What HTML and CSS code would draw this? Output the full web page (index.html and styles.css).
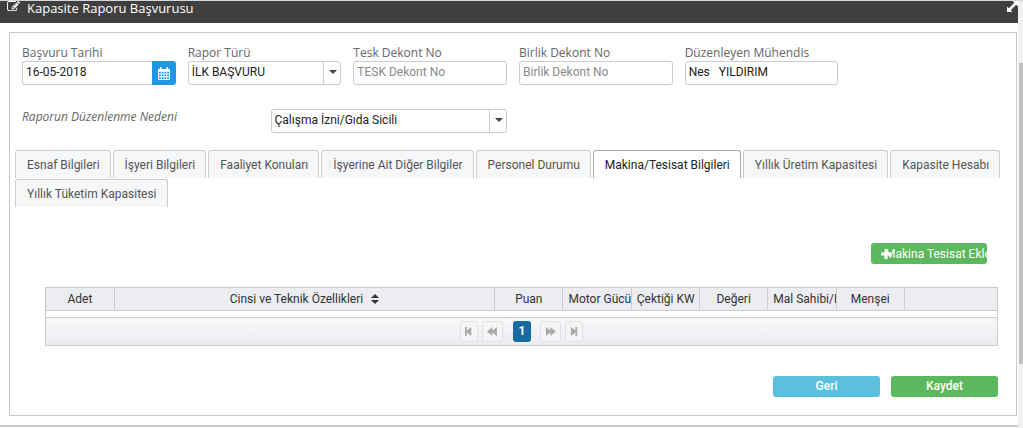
FILE: index.html
```html
<!DOCTYPE html>
<html lang="tr">
<head>
<meta charset="utf-8">
<title>Kapasite Raporu Başvurusu</title>
<link rel="stylesheet" href="styles.css">
</head>
<body>
<div class="viewport">
  <main class="page">
    <header class="titlebar">
      <svg class="edit-icon" viewBox="0 0 1792 1536" aria-hidden="true"><path d="M888 1056l116-116-152-152-116 116v56h96v96h56zm440-720q-16-16-33 1L945 687q-17 17-1 33t33-1l350-350q17-17 1-33zm80 594v190q0 119-84.500 203.500T1120 1408H288q-119 0-203.500-84.500T0 1120V288Q0 169 84.500 84.500T288 0h832q63 0 117 25 15 7 18 23 3 17-9 29l-49 49q-14 14-32 8-23-6-45-6H288q-66 0-113 47t-47 113v832q0 66 47 113t113 47h832q66 0 113-47t47-113V994q0-13 9-22l64-64q15-15 35-7t20 29zm-96-738l288 288-672 672H640V864zm444 132l-92 92-288-288 92-92q28-28 68-28t68 28l152 152q28 28 28 68t-28 68z"/></svg>
      <h1 class="title">Kapasite Raporu Başvurusu</h1>
      <button class="expand" type="button" aria-label="Tam ekran"><svg viewBox="0 0 12 12"><path d="M6 0h6v6L10 4 4 10l2 2H0V6l2 2 6-6z"/></svg></button>
    </header>
    <section class="panel">
      <form class="form">
        <div class="row six">
          <div class="field">
            <label for="tarih">Başvuru Tarihi</label>
            <div class="date">
              <input class="control" id="tarih" type="text" value="16-05-2018">
              <button class="calendar" type="button" aria-label="Takvim"><svg viewBox="0 0 13 14"><path fill-rule="evenodd" d="M1 2h1V1q0-1 1-1t1 1v1h5V1q0-1 1-1t1 1v1h1q1 0 1 1v10q0 1-1 1H1q-1 0-1-1V3q0-1 1-1zm0 3v2h2V5zm3 0v2h2V5zm3 0v2h2V5zm3 0v2h2V5zM1 8v2h2V8zm3 0v2h2V8zm3 0v2h2V8zm3 0v2h2V8zm-9 3v2h2v-2zm3 0v2h2v-2zm3 0v2h2v-2zm3 0v2h2v-2z"/></svg></button>
            </div>
          </div>
          <div class="field">
            <label for="tur">Rapor Türü</label>
            <div class="select">
              <select class="control" id="tur"><option>İLK BAŞVURU</option></select>
              <span class="arrow"><svg viewBox="0 0 8 4"><path d="M0 0h8L4 4z"/></svg></span>
            </div>
          </div>
          <div class="field">
            <label for="tesk">Tesk Dekont No</label>
            <input class="control" id="tesk" type="text" placeholder="TESK Dekont No">
          </div>
          <div class="field">
            <label for="birlik">Birlik Dekont No</label>
            <input class="control" id="birlik" type="text" placeholder="Birlik Dekont No">
          </div>
          <div class="field">
            <label for="muhendis">Düzenleyen Mühendis</label>
            <input class="control" id="muhendis" type="text" value="Nes   YILDIRIM">
          </div>
        </div>
        <div class="row four">
          <label class="reason" for="neden">Raporun Düzenlenme Nedeni</label>
          <div class="select">
            <select class="control" id="neden"><option>Çalışma İzni/Gıda Sicili</option></select>
            <span class="arrow"><svg viewBox="0 0 8 4"><path d="M0 0h8L4 4z"/></svg></span>
          </div>
        </div>
      </form>
      <nav class="tabs" role="tablist">
        <button class="tab" type="button" role="tab">Esnaf Bilgileri</button>
        <button class="tab" type="button" role="tab">İşyeri Bilgileri</button>
        <button class="tab" type="button" role="tab">Faaliyet Konuları</button>
        <button class="tab" type="button" role="tab">İşyerine Ait Diğer Bilgiler</button>
        <button class="tab" type="button" role="tab">Personel Durumu</button>
        <button class="tab active" type="button" role="tab" aria-selected="true">Makina/Tesisat Bilgileri</button>
        <button class="tab" type="button" role="tab">Yıllık Üretim Kapasitesi</button>
        <button class="tab" type="button" role="tab">Kapasite Hesabı</button>
        <button class="tab" type="button" role="tab">Yıllık Tüketim Kapasitesi</button>
      </nav>
      <div class="content">
        <div class="toolbar">
          <button class="btn green add" type="button"><svg class="plus" viewBox="0 0 10 10"><path d="M3.500 0h3v3.500H10v3H6.500V10h-3V6.500H0v-3h3.500z"/></svg><span class="add-text">Makina Tesisat Ekle</span></button>
        </div>
        <div class="grid">
          <table class="table">
            <colgroup><col class="narrow"><col class="wide"><col class="narrow"><col class="narrow"><col class="narrow"><col class="narrow"><col class="narrow"><col class="narrow"><col></colgroup>
            <thead>
              <tr><th>Adet</th><th>Cinsi ve Teknik Özellikleri<svg class="sort" viewBox="0 0 8 10"><path d="M0 4l4-4 4 4zM0 6h8l-4 4z"/></svg></th><th>Puan</th><th class="cut">Motor Gücü</th><th class="cut">Çektiği KW</th><th>Değeri</th><th class="cut">Mal Sahibi/K</th><th>Menşei</th><th></th></tr>
            </thead>
          </table>
          <div class="pager">
            <button class="page-btn" type="button" aria-label="İlk" disabled><svg viewBox="0 0 8 10"><path d="M0 0h2v4l5-4v10L2 6v4H0z"/></svg></button>
            <button class="page-btn large" type="button" aria-label="Önceki" disabled><svg viewBox="0 0 12 10"><path d="M6 0v4l5-4v10L6 6v4L0 5z"/></svg></button>
            <button class="page-btn current" type="button">1</button>
            <button class="page-btn large" type="button" aria-label="Sonraki" disabled><svg viewBox="0 0 12 10"><path d="M6 0v4L1 0v10l5-4v4l6-5z"/></svg></button>
            <button class="page-btn" type="button" aria-label="Son" disabled><svg viewBox="0 0 8 10"><path d="M8 0H6v4L1 0v10l5-4v4h2z"/></svg></button>
          </div>
        </div>
        <div class="actions">
          <button class="btn blue" type="button">Geri</button>
          <button class="btn green" type="button">Kaydet</button>
        </div>
      </div>
    </section>
  </main>
  <div class="scrollbar"><div class="thumb"></div></div>
</div>
</body>
</html>
```
FILE: styles.css
```css
* { box-sizing: border-box; }
body {
  margin: 0;
  background: #fff;
  color: #333;
  font: 12px/16px Roboto, sans-serif;
}
button, input, select { font: inherit; margin: 0; }
button { padding: 0; border: 0; background: none; }
svg { display: block; fill: currentColor; flex: none; }

.viewport { display: flex; height: 100vh; overflow: hidden; border-top: 1px solid #d5d8da; }
.page { flex: 1; min-width: 0; align-self: flex-start; border-bottom: 2px solid #c8cbcb; }
.scrollbar { width: 5px; padding: 62px 0 64px 1px; background: #f1f1f1; display: flex; }
.thumb { flex: 1; background: #c1c1c1; }

.titlebar {
  display: flex;
  align-items: flex-start;
  height: 22px;
  padding-left: 7px;
  background: #3f3f3f;
  color: #fff;
}
.edit-icon { width: 13px; height: 11px; }
.title { flex: 1; margin: 0 0 0 7px; font: 13px/14px "Open Sans", sans-serif; }
.expand { color: #fff; }
.expand svg { width: 11px; height: 11px; }

.panel { margin: 9px 1px 9px 9px; border: 1px solid #c8c8c8; }
.form { padding: 12px 12px 0; }
.row { display: grid; column-gap: 12px; }
.six { grid-template-columns: repeat(6, 1fr); }
.four { grid-template-columns: repeat(4, 1fr); margin-top: 24px; }
.field { display: flex; flex-direction: column; min-width: 0; }
.field label { font: 12px/16px "Open Sans", sans-serif; color: #666; }
.reason { font: italic 12px/16px "Open Sans", sans-serif; color: #666; }
.control {
  width: 100%;
  height: 24px;
  padding: 0 3px 2px;
  border: 1px solid #ccc;
  border-radius: 3px;
  background: #fff;
  color: #222;
  appearance: none;
}
.control::placeholder { color: #8a8a8a; }
.date { display: flex; }
.date .control { border-radius: 3px 0 0 3px; border-right: 0; flex: 1; min-width: 0; }
.calendar { display: grid; place-items: center; width: 24px; height: 24px; background: #2196e3; color: #fff; border-radius: 0 3px 3px 0; }
.calendar svg { width: 12px; height: 13px; }
.select { display: grid; }
.select > * { grid-area: 1 / 1; }
.arrow { justify-self: end; display: flex; justify-content: center; width: 18px; padding-top: 9px; border-left: 1px solid #ccc; pointer-events: none; color: #444; }
.arrow svg { width: 8px; height: 4px; }

.tabs { display: flex; flex-wrap: wrap; gap: 1px 2px; margin-top: 17px; padding: 0 5px; }
.tab {
  height: 28px;
  padding: 0 10px 0 11px;
  border: 1px solid #ccc;
  border-bottom: 0;
  border-radius: 3px 3px 0 0;
  background: #f6f7f9;
  color: #555;
}
.tab.active { background: #fff; color: #222; border-color: #aaa; }

.content { padding: 36px 18px 18px 35px; }
.btn { height: 21px; border-radius: 3px; color: #fff; font-weight: 500; }
.green { background: #5cb85c; }
.blue { background: #5bc0de; }
.toolbar { display: flex; justify-content: flex-end; padding-right: 11px; }
.add { display: flex; align-items: center; width: 116px; padding-left: 10px; overflow: hidden; white-space: nowrap; font-weight: 400; }
.plus { width: 10px; height: 10px; }
.add-text { margin-left: -6px; }

.grid { margin-top: 23px; border: 1px solid #ccc; }
.table { width: 100%; border-collapse: collapse; table-layout: fixed; }
.narrow { width: 7.18%; }
.wide { width: 40%; }
.table th { height: 22px; padding: 0 6px; background: #ebedf0; border-bottom: 1px solid #ccc; border-left: 1px solid #ccc; font-weight: 400; white-space: nowrap; overflow: hidden; }
.table th:first-child { border-left: 0; }
.table .cut { text-align: left; padding: 0 0 0 5px; }
.sort { display: inline-block; width: 8px; height: 10px; margin-left: 8px; vertical-align: -1px; }
.pager {
  display: flex;
  align-items: center;
  justify-content: center;
  height: 28px;
  margin-top: 6px;
  border-top: 1px solid #ccc;
  background: linear-gradient(#f6f7f9, #ebedf0);
}
.page-btn { display: grid; place-items: center; width: 18px; height: 21px; margin-right: 4px; border: 1px solid #dfe1e4; border-radius: 3px; background: #f4f5f7; color: #aaa; }
.page-btn:last-child { margin-right: 0; }
.page-btn.large { width: 21px; }
.page-btn svg { height: 9px; width: auto; }
.page-btn.current { margin: 0 9px 0 6px; border: 0; background: #186ba0; color: #fff; font-weight: 700; }
.actions { display: flex; justify-content: flex-end; gap: 11px; margin-top: 30px; }
.actions .btn { width: 107px; }
```
